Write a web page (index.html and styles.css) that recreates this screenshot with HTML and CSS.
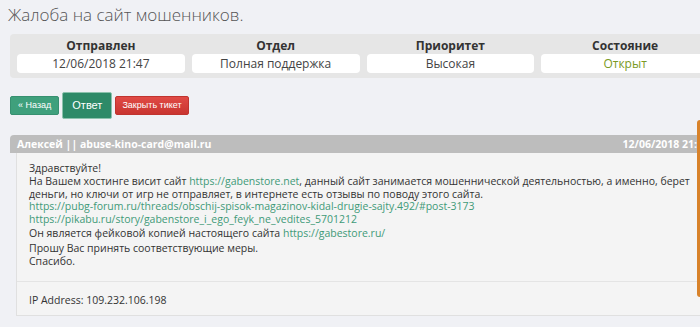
FILE: index.html
```html
<!DOCTYPE html>
<html lang="ru">
<head>
  <meta charset="UTF-8">
  <title>Жалоба на сайт мошенников.</title>
  <link rel="stylesheet" href="styles.css">
</head>
<body>
  <div class="page">
    <h1>Жалоба на сайт мошенников.</h1>

    <div class="ticket-info">
      <div class="info-col">
        <div class="info-label">Отправлен</div>
        <div class="info-value">12/06/2018 21:47</div>
      </div>
      <div class="info-col">
        <div class="info-label">Отдел</div>
        <div class="info-value">Полная поддержка</div>
      </div>
      <div class="info-col">
        <div class="info-label">Приоритет</div>
        <div class="info-value">Высокая</div>
      </div>
      <div class="info-col">
        <div class="info-label">Состояние</div>
        <div class="info-value status-open">Открыт</div>
      </div>
    </div>

    <div class="actions">
      <a href="#" class="btn btn-back">« Назад</a>
      <a href="#" class="btn btn-reply">Ответ</a>
      <a href="#" class="btn btn-close">Закрыть тикет</a>
    </div>

    <div class="message">
      <div class="message-head">
        <span>Алексей || abuse-kino-card@mail.ru</span>
        <span>12/06/2018 21:47</span>
      </div>
      <div class="message-body">
        <p>
          Здравствуйте!<br>
          На Вашем хостинге висит сайт <a href="#">https://gabenstore.net</a>, данный сайт занимается мошеннической деятельностью, а именно, берет деньги, но ключи от игр не отправляет, в интернете есть отзывы по поводу этого сайта.<br>
          <a href="#">https://pubg-forum.ru/threads/obschij-spisok-magazinov-kidal-drugie-sajty.492/#post-3173</a><br>
          <a href="#">https://pikabu.ru/story/gabenstore_i_ego_feyk_ne_vedites_5701212</a>
        </p>
        <p>Он является фейковой копией настоящего сайта <a href="#">https://gabestore.ru/</a></p>
        <p>Прошу Вас принять соответствующие меры.<br>Спасибо.</p>
        <div class="message-ip">IP Address: 109.232.106.198</div>
      </div>
    </div>
  </div>

  <div class="feedback-tab"></div>
</body>
</html>
```

FILE: styles.css
```css
body {
  font-family: "Open Sans", Arial, sans-serif;
  background-color: #f0f1f5;
  color: #333;
  margin: 0;
  overflow: hidden;
}

.page {
  width: 706px;
  padding: 0 0 0 10px;
}

h1 {
  font-size: 17px;
  font-weight: 300;
  color: #555;
  margin: 0 0 0 -2px;
  padding-top: 3px;
  height: 31px;
  line-height: 24px;
}

.ticket-info {
  display: flex;
  gap: 7px;
  background-color: #e6e6e6;
  border-radius: 4px;
  padding: 4px 7px 5px;
}

.info-col {
  flex: 1;
  text-align: center;
}

.info-label {
  font-size: 12px;
  font-weight: bold;
  color: #333;
  line-height: 16px;
}

.info-value {
  background-color: #fff;
  border-radius: 4px;
  font-size: 12px;
  color: #444;
  line-height: 19px;
}

.status-open {
  color: #7a9a23;
}

.actions {
  display: flex;
  align-items: center;
  gap: 3px;
  margin-top: 13px;
  height: 29px;
}

.btn {
  font-family: "Liberation Sans", Arial, sans-serif;
  color: #fff;
  text-decoration: none;
  font-size: 9px;
  line-height: 17px;
  border-radius: 2px;
}

.btn-back {
  background-color: #3fa07c;
  border: 1px solid #379070;
  padding: 0 7px;
}

.btn-reply {
  background-color: #2e8a68;
  border: 1px solid #8cc2ad;
  font-size: 11px;
  line-height: 25px;
  padding: 0 9px;
}

.btn-close {
  background: linear-gradient(#e04a45, #c93530);
  border: 1px solid #c0342f;
  padding: 0 6px;
}

.message {
  margin-top: 15px;
}

.message-head {
  display: flex;
  justify-content: space-between;
  background-color: #bdbdbd;
  border-radius: 4px 4px 0 0;
  color: #fff;
  font-weight: bold;
  font-size: 10.5px;
  line-height: 18px;
  padding: 0 7px;
}

.message-body {
  margin-left: 6px;
  background-color: #f4f4f4;
  border: 1px solid #e0e0e0;
  border-top: none;
  padding: 9px 12px 6px;
  font-size: 10.5px;
  line-height: 12.8px;
}

.message-body p {
  margin: 0 0 1.5px;
}

.message-body a {
  color: #3f9a78;
  text-decoration: none;
}

.message-ip {
  border-top: 1px solid #e4e4e4;
  margin: 14px -12px 0;
  padding: 12px 12px 2px;
}

.feedback-tab {
  position: fixed;
  right: 0;
  top: 120px;
  width: 3px;
  height: 177px;
  background-color: #d8822a;
  border-radius: 3px 0 0 3px;
}
```
